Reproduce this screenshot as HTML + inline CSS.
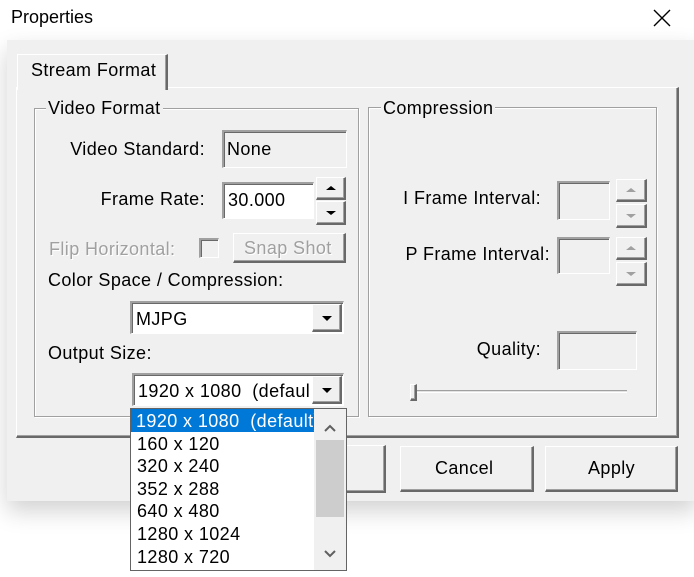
<!DOCTYPE html><html><head><style>
*{box-sizing:border-box}
body{margin:0;width:694px;height:577px;background:#fff;font-family:"Liberation Sans",sans-serif;font-size:18px;letter-spacing:0.4px;color:#000;position:relative;overflow:hidden}
.a{position:absolute}
.dlg{left:7px;top:40px;width:690px;height:461px;background:#f0f0f0;box-shadow:0 10px 22px rgba(0,0,0,.18)}
.sunk{border-top:2px solid #a0a0a0;border-left:2px solid #a0a0a0;border-bottom:1px solid #fff;border-right:1px solid #fff;box-shadow:inset 1px 1px 0 #696969}
.rais{background:#f0f0f0;border-top:1px solid #fff;border-left:1px solid #fff;border-bottom:2px solid #696969;border-right:2px solid #696969;box-shadow:inset -1px -1px 0 #a0a0a0}
.grp{border:1px solid #a0a0a0;box-shadow:1px 1px 0 #fff, inset 1px 1px 0 #fff}
.lg{background:#f0f0f0;padding:0 2px;line-height:20px}
.t{line-height:20px;white-space:nowrap}
.dis{color:#a0a0a0;text-shadow:1px 1px 0 #fff}
.tri{width:0;height:0;border-left:5px solid transparent;border-right:5px solid transparent}
.row{height:22.6px;line-height:24px;padding-left:6px;white-space:nowrap}
</style></head><body>
<div class="a t" style="left:11px;top:7px;font-size:18px;letter-spacing:0">Properties</div>
<svg class="a" style="left:652px;top:8px" width="20" height="20"><path d="M2 2L18 18M18 2L2 18" stroke="#000" stroke-width="1.4"/></svg>
<div class="a dlg"></div>
<div class="a" style="left:16px;top:87px;width:663px;height:351px;border-top:1px solid #fff;border-left:1px solid #fff;border-right:2px solid #696969;border-bottom:2px solid #696969;box-shadow:inset -1px -1px 0 #a0a0a0"></div>
<div class="a" style="left:17px;top:54px;width:151px;height:36px;background:#f0f0f0;border-top:1px solid #fff;border-left:1px solid #fff;border-right:2px solid #696969;box-shadow:inset -1px 0 0 #a0a0a0"></div>
<div class="a t" style="left:31px;top:60px">Stream Format</div>
<div class="a grp" style="left:34px;top:108px;width:325px;height:309px"></div>
<div class="a lg" style="left:46px;top:98px">Video Format</div>
<div class="a t" style="right:489px;top:139px">Video Standard:</div>
<div class="a sunk" style="left:222px;top:130px;width:125px;height:38px"></div>
<div class="a t" style="left:227px;top:139px">None</div>
<div class="a t" style="right:489px;top:189px">Frame Rate:</div>
<div class="a sunk" style="left:222px;top:182px;width:92px;height:37px;background:#fff"></div>
<div class="a t" style="left:228px;top:190px">30.000</div>
<div class="a rais" style="left:316px;top:177px;width:30px;height:23px"></div>
<div class="a tri" style="left:326px;top:186px;border-bottom:4px solid #000"></div>
<div class="a rais" style="left:316px;top:201px;width:30px;height:24px"></div>
<div class="a tri" style="left:326px;top:211px;border-top:4px solid #000"></div>
<div class="a t dis" style="left:49px;top:239px">Flip Horizontal:</div>
<div class="a sunk" style="left:199px;top:238px;width:20px;height:20px"></div>
<div class="a rais" style="left:233px;top:233px;width:113px;height:30px"></div>
<div class="a t dis" style="left:244px;top:238px">Snap Shot</div>
<div class="a t" style="left:48px;top:270px">Color Space / Compression:</div>
<div class="a sunk" style="left:130px;top:301px;width:214px;height:33px;background:#fff"></div>
<div class="a t" style="left:136px;top:309px">MJPG</div>
<div class="a rais" style="left:312px;top:304px;width:30px;height:28px"></div>
<div class="a tri" style="left:322px;top:316px;border-top:5px solid #000"></div>
<div class="a t" style="left:48px;top:343px">Output Size:</div>
<div class="a sunk" style="left:132px;top:373px;width:212px;height:33px;background:#fff"></div>
<div class="a t" style="left:138px;top:381px;width:172px;overflow:hidden">1920 x 1080 &nbsp;(default)</div>
<div class="a rais" style="left:312px;top:376px;width:30px;height:28px"></div>
<div class="a tri" style="left:322px;top:388px;border-top:5px solid #000"></div>
<div class="a grp" style="left:368px;top:107px;width:289px;height:310px"></div>
<div class="a lg" style="left:381px;top:98px">Compression</div>
<div class="a t" style="right:153px;top:188px">I Frame Interval:</div>
<div class="a sunk" style="left:557px;top:181px;width:53px;height:39px"></div>
<div class="a rais" style="left:616px;top:179px;width:31px;height:23px"></div>
<div class="a tri" style="left:626px;top:188px;border-bottom:4px solid #a0a0a0"></div>
<div class="a rais" style="left:616px;top:204px;width:31px;height:24px"></div>
<div class="a tri" style="left:626px;top:214px;border-top:4px solid #a0a0a0"></div>
<div class="a t" style="right:144px;top:244px">P Frame Interval:</div>
<div class="a sunk" style="left:557px;top:237px;width:53px;height:37px"></div>
<div class="a rais" style="left:616px;top:237px;width:31px;height:23px"></div>
<div class="a tri" style="left:626px;top:246px;border-bottom:4px solid #a0a0a0"></div>
<div class="a rais" style="left:616px;top:262px;width:31px;height:24px"></div>
<div class="a tri" style="left:626px;top:272px;border-top:4px solid #a0a0a0"></div>
<div class="a t" style="right:153px;top:339px">Quality:</div>
<div class="a sunk" style="left:557px;top:331px;width:80px;height:39px"></div>
<div class="a" style="left:411px;top:390px;width:216px;height:3px;border-top:1px solid #a0a0a0;border-bottom:1px solid #fff;background:#e3e3e3"></div>
<div class="a rais" style="left:410px;top:384px;width:7px;height:17px"></div>
<div class="a rais" style="left:250px;top:445px;width:136px;height:48px"></div>
<div class="a rais" style="left:400px;top:446px;width:134px;height:46px"></div>
<div class="a t" style="left:435px;top:458px">Cancel</div>
<div class="a rais" style="left:545px;top:446px;width:133px;height:46px"></div>
<div class="a t" style="left:588px;top:458px">Apply</div>
<div class="a" style="left:130px;top:408px;width:217px;height:163px;background:#fff;border:1px solid #646464"></div>
<div class="a" style="left:131px;top:409px;width:183px;height:161px;overflow:hidden">
<div class="row" style="background:#0078d7;color:#fff;padding-left:5px">1920 x 1080 &nbsp;(default)</div>
<div class="row">160 x 120</div><div class="row">320 x 240</div><div class="row">352 x 288</div><div class="row">640 x 480</div><div class="row">1280 x 1024</div><div class="row">1280 x 720</div>
</div>
<div class="a" style="left:314px;top:409px;width:32px;height:161px;background:#f0f0f0"></div>
<div class="a" style="left:316px;top:440px;width:28px;height:77px;background:#cdcdcd"></div>
<svg class="a" style="left:314px;top:409px" width="32" height="161"><path d="M11 22L16 17L21 22" fill="none" stroke="#606060" stroke-width="2"/><path d="M11 142L16 147L21 142" fill="none" stroke="#606060" stroke-width="2"/></svg>
</body></html>
